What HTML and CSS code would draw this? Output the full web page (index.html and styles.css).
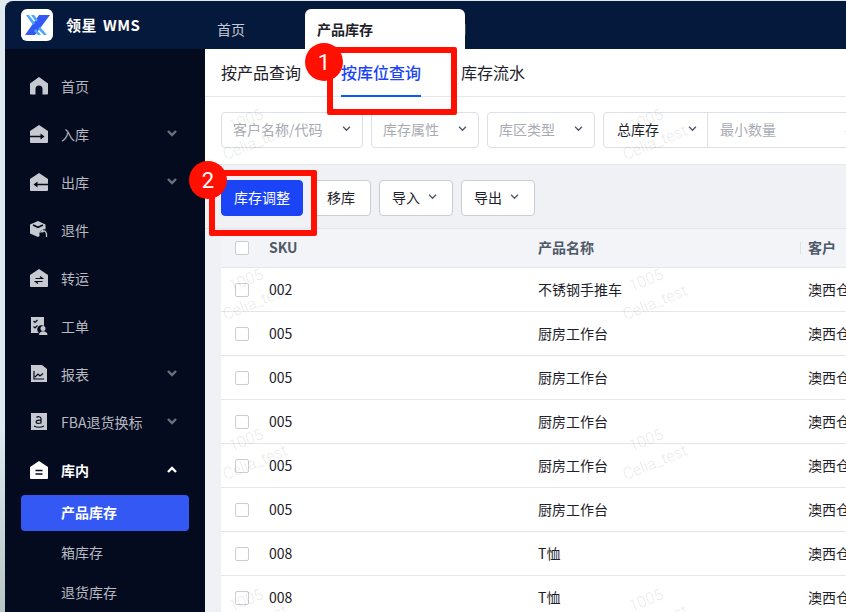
FILE: index.html
```html
<!DOCTYPE html>
<html lang="zh-CN">
<head>
    <meta charset="UTF-8">
    <title>领星 WMS - 产品库存</title>
    <link rel="stylesheet" href="styles.css">
</head>
<body>
    <div class="app">
        <header class="topbar">
            <div class="brand">
                <svg class="logo" viewBox="0 0 32 32">
                    <rect width="32" height="32" rx="6" fill="#fff"/>
                    <path d="M18 6h11L14 26H4z" fill="#3358f4"/>
                    <path d="M5 6h3l6 8-2 2zM10 6h3l4 5-2 2zM17 20l2-2 7 8h-3zM13 22l2-2 5 6h-3z" fill="#4aa8fb"/>
                </svg>
                <span class="brand-name">领星 WMS</span>
            </div>
            <nav class="page-tabs">
                <a class="page-tab">首页</a>
                <a class="page-tab active">产品库存</a>
                <i class="page-divider"></i>
            </nav>
        </header>

        <div class="main">
            <aside class="sidebar">
                <a class="menu-item">
                    <svg class="icon" viewBox="0 0 18 18"><path d="M9 0l9 6.5V16.500a1 1 0 0 1-1 1h-4.500V12a3.500 3.500 0 0 0-7 0v5.500H1a1 1 0 0 1-1-1V6.500z"/></svg>
                    <span>首页</span>
                </a>
                <a class="menu-item">
                    <svg class="icon" viewBox="0 0 18 18"><path d="M9 0l9 6v11a1 1 0 0 1-1 1H1a1 1 0 0 1-1-1V6z"/><path class="cut" d="M0 11.500h13"/><path class="cut-fill" d="M10.500 8.500l4 3-4 3z"/></svg>
                    <span>入库</span>
                    <svg class="chevron" viewBox="0 0 10 7"><path d="M1 1l4 4 4-4"/></svg>
                </a>
                <a class="menu-item">
                    <svg class="icon" viewBox="0 0 18 18"><path d="M9 0l9 6v11a1 1 0 0 1-1 1H1a1 1 0 0 1-1-1V6z"/><path class="cut" d="M5 11.500h13"/><path class="cut-fill" d="M7.500 8.500l-4 3 4 3z"/></svg>
                    <span>出库</span>
                    <svg class="chevron" viewBox="0 0 10 7"><path d="M1 1l4 4 4-4"/></svg>
                </a>
                <a class="menu-item">
                    <svg class="icon" viewBox="0 0 18 18"><path d="M8 0l7.500 3.500V8.500a5 5 0 0 0-6 6.500L8 16 0 12.500v-9z"/><path class="cut" d="M3 4l5 2.300L13 4"/><path class="line" d="M10.500 11.500l2-2.200 .5 2.200M12.500 10c3-.5 4.500 1.500 4 6"/></svg>
                    <span>退件</span>
                </a>
                <a class="menu-item">
                    <svg class="icon" viewBox="0 0 18 18"><path d="M9 0l9 6v11a1 1 0 0 1-1 1H1a1 1 0 0 1-1-1V6z"/><path class="cut thin" d="M5.500 9.500h7l-2.500-2M12.500 12.500h-7l2.500 2"/></svg>
                    <span>转运</span>
                </a>
                <a class="menu-item">
                    <svg class="icon" viewBox="0 0 18 18"><path d="M1 0h13v9a4 4 0 0 0-5 7H1z"/><path class="cut thin" d="M3.500 4l1.500 1.500L7.500 3M3.500 9.500L5 11l2.500-2.500"/><circle cx="13" cy="11.500" r="2.500"/><path d="M9 18c0-5 8.500-5 8.500 0z"/></svg>
                    <span>工单</span>
                </a>
                <a class="menu-item">
                    <svg class="icon" viewBox="0 0 18 18"><path d="M1 0h11l5 4v13H1z"/><path class="cut thin" d="M4 6v8h10M5 12l3-3 2 2 3-2.500"/></svg>
                    <span>报表</span>
                    <svg class="chevron" viewBox="0 0 10 7"><path d="M1 1l4 4 4-4"/></svg>
                </a>
                <a class="menu-item">
                    <svg class="icon" viewBox="0 0 18 18"><rect x="1" width="16" height="17"/><path class="cut thin" d="M6.500 4.500c1-1.200 4.500-1.200 4.500 1v5M11 7.500c-2-.6-5-.3-5 1.500s4 1.800 5 .2M4 13c3 1.500 7 1.500 10 0"/></svg>
                    <span>FBA退货换标</span>
                    <svg class="chevron" viewBox="0 0 10 7"><path d="M1 1l4 4 4-4"/></svg>
                </a>
                <a class="menu-item open">
                    <svg class="icon" viewBox="0 0 18 18"><path d="M9 0l9 6v11a1 1 0 0 1-1 1H1a1 1 0 0 1-1-1V6z"/><path class="cut" d="M5.500 9.500h7M5.500 13h7"/></svg>
                    <span>库内</span>
                    <svg class="chevron" viewBox="0 0 10 7"><path d="M1 6l4-4 4 4"/></svg>
                </a>
                <a class="sub-item active">产品库存</a>
                <a class="sub-item">箱库存</a>
                <a class="sub-item">退货库存</a>
            </aside>

            <section class="content">
                <div class="sub-tabs">
                    <a class="sub-tab">按产品查询</a>
                    <a class="sub-tab active">按库位查询</a>
                    <a class="sub-tab">库存流水</a>
                </div>

                <div class="filters">
                    <div class="field w142"><span>客户名称/代码</span><svg class="caret" viewBox="0 0 10 7"><path d="M1 1l4 4 4-4"/></svg></div>
                    <div class="field w108"><span>库存属性</span><svg class="caret" viewBox="0 0 10 7"><path d="M1 1l4 4 4-4"/></svg></div>
                    <div class="field w108"><span>库区类型</span><svg class="caret" viewBox="0 0 10 7"><path d="M1 1l4 4 4-4"/></svg></div>
                    <div class="field-group">
                        <div class="group-select"><span>总库存</span><svg class="caret" viewBox="0 0 10 7"><path d="M1 1l4 4 4-4"/></svg></div>
                        <div class="group-input"><span>最小数量</span><b>-</b></div>
                    </div>
                </div>

                <div class="toolbar">
                    <button class="btn primary w82">库存调整</button>
                    <button class="btn w60">移库</button>
                    <button class="btn menu w74">导入<svg class="caret" viewBox="0 0 10 7"><path d="M1 1l4 4 4-4"/></svg></button>
                    <button class="btn menu w74">导出<svg class="caret" viewBox="0 0 10 7"><path d="M1 1l4 4 4-4"/></svg></button>
                </div>

                <table class="stock-table">
                    <thead>
                        <tr>
                            <th class="col-check"><i class="check"></i></th>
                            <th class="col-sku">SKU</th>
                            <th class="col-name">产品名称</th>
                            <th class="col-customer"><i class="th-sep"></i>客户</th>
                        </tr>
                    </thead>
                    <tbody>
                        <tr><td><i class="check"></i></td><td>002</td><td>不锈钢手推车</td><td>澳西仓库</td></tr>
                        <tr><td><i class="check"></i></td><td>005</td><td>厨房工作台</td><td>澳西仓库</td></tr>
                        <tr><td><i class="check"></i></td><td>005</td><td>厨房工作台</td><td>澳西仓库</td></tr>
                        <tr><td><i class="check"></i></td><td>005</td><td>厨房工作台</td><td>澳西仓库</td></tr>
                        <tr><td><i class="check"></i></td><td>005</td><td>厨房工作台</td><td>澳西仓库</td></tr>
                        <tr><td><i class="check"></i></td><td>005</td><td>厨房工作台</td><td>澳西仓库</td></tr>
                        <tr><td><i class="check"></i></td><td>008</td><td>T恤</td><td>澳西仓库</td></tr>
                        <tr><td><i class="check"></i></td><td>008</td><td>T恤</td><td>澳西仓库</td></tr>
                    </tbody>
                </table>

                <!-- 水印 -->
                <div class="watermarks">
                    <div class="mark"><span>1005</span><span>Celia_test</span></div>
                    <div class="mark"><span>1005</span><span>Celia_test</span></div>
                    <div class="mark"><span>1005</span><span>Celia_test</span></div>
                    <div class="mark"><span>1005</span><span>Celia_test</span></div>
                    <div class="mark"><span>1005</span><span>Celia_test</span></div>
                    <div class="mark"><span>1005</span><span>Celia_test</span></div>
                    <div class="mark"><span>1005</span><span>Celia_test</span></div>
                    <div class="mark"><span>1005</span><span>Celia_test</span></div>
                </div>
            </section>
        </div>

        <!-- 标注 -->
        <div class="callout box-one"></div>
        <div class="badge badge-one">1</div>
        <div class="callout box-two"></div>
        <div class="badge badge-two">2</div>
    </div>
</body>
</html>
```
FILE: styles.css
```css
* {
    box-sizing: border-box;
}

html, body {
    margin: 0;
    height: 100%;
    overflow: hidden;
}

body {
    padding: 1px 0 0 5px;
    background: linear-gradient(#dfeaf0 70%, #b9c4c6);
    font-family: "Noto Sans CJK SC", Roboto, sans-serif;
    font-size: 14px;
    color: #1d2129;
}

.app {
    position: relative;
    display: flex;
    flex-direction: column;
    width: 841px;
    height: 611px;
    overflow: hidden;
    border-top-left-radius: 8px;
}

/* 顶栏 */
.topbar {
    display: flex;
    flex: none;
    height: 48px;
    background: #05193d;
}

.brand {
    display: flex;
    align-items: center;
    gap: 13px;
    width: 200px;
    padding-left: 16px;
}

.logo {
    width: 32px;
    height: 32px;
}

.brand-name {
    padding-bottom: 2px;
    font-size: 15px;
    font-weight: 700;
    letter-spacing: 0.5px;
    word-spacing: 2px;
    color: #fff;
}

.page-tabs {
    display: flex;
    align-items: flex-end;
}

.page-tab {
    display: flex;
    align-items: center;
    width: 100px;
    height: 40px;
    padding-left: 12px;
    color: #c4c9d3;
}

.page-tab.active {
    width: 160px;
    background: #fff;
    border-radius: 6px 6px 0 0;
    font-weight: 700;
    color: #1d2129;
}

.page-divider {
    width: 1px;
    height: 11px;
    margin-bottom: 14px;
    background: #3a4a68;
}

.main {
    display: flex;
    flex: 1;
    min-height: 0;
}

/* 侧边栏 */
.sidebar {
    flex: none;
    width: 200px;
    padding-top: 14px;
    background: #050b1f;
    overflow: hidden;
}

.menu-item {
    display: flex;
    align-items: center;
    gap: 13px;
    height: 48px;
    padding: 0 28px 2px 25px;
    color: #b6b9c0;
}

.icon {
    flex: none;
    width: 18px;
    height: 18px;
    fill: #c6c9cf;
}

.cut, .line {
    fill: none;
    stroke: #050b1f;
    stroke-width: 1.6;
}

.cut.thin {
    stroke-width: 1.2;
}

.line {
    stroke: #c6c9cf;
    stroke-width: 1.3;
}

.cut-fill {
    fill: #050b1f;
}

.chevron {
    width: 10px;
    height: 7px;
    margin-left: auto;
    margin-bottom: 2px;
    fill: none;
    stroke: #6e717b;
    stroke-width: 2.4;
}

.menu-item.open {
    font-weight: 700;
    color: #fff;
}

.menu-item.open .icon {
    fill: #fff;
}

.menu-item.open .chevron {
    stroke: #fff;
}

.sub-item {
    display: flex;
    align-items: center;
    height: 36px;
    margin: 0 16px 4px;
    padding: 0 0 2px 40px;
    border-radius: 4px;
    color: #b6b9c0;
}

.sub-item.active {
    background: #3358f4;
    font-weight: 700;
    color: #fff;
}

/* 内容区 */
.content {
    position: relative;
    flex: 1;
    min-width: 0;
    background: #f0f1f5;
    overflow: hidden;
}

.sub-tabs {
    display: flex;
    gap: 40px;
    height: 48px;
    padding-left: 16px;
    background: #fff;
    border-bottom: 1px solid #e5e6eb;
    font-size: 16px;
}

.sub-tab {
    height: 48px;
    line-height: 46px;
    white-space: nowrap;
}

.sub-tab.active {
    border-bottom: 2px solid #0b5cf5;
    font-weight: 500;
    color: #1a44f5;
}

.filters {
    display: flex;
    gap: 8px;
    height: 68px;
    padding: 15px 0 16px 16px;
    background: #fff;
    border-bottom: 1px solid #e5e6eb;
    color: #a8abb2;
}

.field, .field-group {
    display: flex;
    flex: none;
    align-items: center;
    height: 36px;
    border: 1px solid #dcdfe6;
    border-radius: 4px;
    white-space: nowrap;
}

.field {
    justify-content: space-between;
    padding: 0 11px 2px;
}

.w142 { width: 142px; }
.w108 { width: 108px; }

.caret {
    flex: none;
    width: 9px;
    height: 6px;
    fill: none;
    stroke: #4e5969;
    stroke-width: 1.6;
}

.field-group {
    width: 300px;
}

.group-select {
    display: flex;
    align-items: center;
    justify-content: space-between;
    width: 104px;
    height: 100%;
    padding: 0 10px 2px 13px;
    border-right: 1px solid #dcdfe6;
    color: #1d2129;
}

.group-input {
    display: flex;
    align-items: center;
    padding: 0 0 2px 12px;
}

.group-input b {
    margin-left: 69px;
    font-weight: 400;
}

.toolbar {
    display: flex;
    gap: 8px;
    height: 64px;
    padding: 15px 0 0 16px;
    border-bottom: 1px solid #e5e6eb;
}

.btn {
    display: flex;
    align-items: center;
    justify-content: center;
    height: 36px;
    padding: 0 0 2px;
    background: #fff;
    border: 1px solid #c9cdd4;
    border-radius: 4px;
    font: inherit;
    color: #1d2129;
}

.btn.menu {
    justify-content: flex-start;
    gap: 8px;
    padding-left: 12px;
}

.btn.primary {
    background: #1a44f5;
    border-color: #1a44f5;
    color: #fff;
}

.w82 { width: 82px; }
.w60 { width: 60px; }
.w74 { width: 74px; }

/* 表格 */
.stock-table {
    width: 900px;
    margin-left: 16px;
    table-layout: fixed;
    border-collapse: separate;
    border-spacing: 0;
    background: #fff;
}

.stock-table th {
    height: 39px;
    padding: 0 0 2px;
    background: #f3f4f8;
    border-bottom: 1px solid #e5e6eb;
    font-weight: 700;
    text-align: left;
    color: #4e5969;
}

.stock-table td {
    height: 44px;
    padding: 0 0 2px;
    border-bottom: 1px solid #e5e6eb;
}

.col-check { width: 48px; }
.col-sku { width: 269px; }
.col-name { width: 262px; }

.stock-table td:last-child {
    padding-left: 8px;
}

.th-sep {
    display: inline-block;
    width: 1px;
    height: 12px;
    margin-right: 7px;
    background: #dcdfe6;
    vertical-align: -1px;
}

.check {
    display: block;
    width: 14px;
    height: 14px;
    margin: 2px 0 0 14px;
    background: #fff;
    border: 1px solid #c9cdd4;
    border-radius: 2px;
}

/* 水印 */
.watermarks {
    position: absolute;
    top: 48px;
    left: 0;
    display: grid;
    grid-template-columns: repeat(2, 400px);
    grid-auto-rows: 160px;
    pointer-events: none;
}

.mark {
    display: flex;
    flex-direction: column;
    align-items: center;
    width: 100px;
    margin-left: 14px;
    padding-top: 7px;
    transform: rotate(-22deg);
    font-family: Roboto, sans-serif;
    font-size: 16px;
    font-weight: 300;
    line-height: 24px;
    color: rgba(60, 60, 60, 0.13);
}

/* 标注 */
.callout {
    position: absolute;
    border: 6px solid #ff1000;
    border-radius: 2px;
}

.box-one {
    top: 46px;
    left: 322px;
    width: 130px;
    height: 68px;
}

.box-two {
    top: 169px;
    left: 204px;
    width: 108px;
    height: 66px;
}

.badge {
    position: absolute;
    display: flex;
    align-items: center;
    justify-content: center;
    width: 38px;
    height: 38px;
    background: #ff1000;
    border-radius: 50%;
    font-family: Roboto, sans-serif;
    font-size: 22px;
    color: #fff;
}

.badge-one {
    top: 42px;
    left: 300px;
}

.badge-two {
    top: 160px;
    left: 184px;
}
```
